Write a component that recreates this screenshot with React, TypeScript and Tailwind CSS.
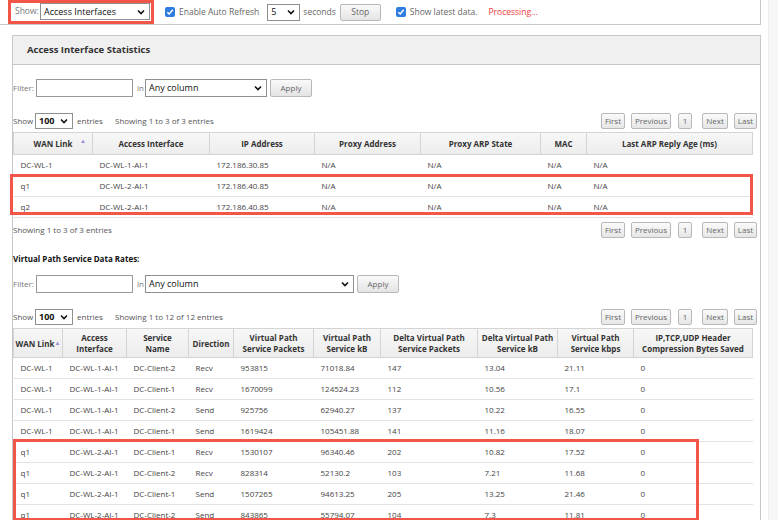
import React from "react";

// Access interface / virtual path stats page

const AI_ROWS = [
  ["DC-WL-1", "DC-WL-1-AI-1", "172.186.30.85", "N/A", "N/A", "N/A", "N/A"],
  ["q1", "DC-WL-2-AI-1", "172.186.40.85", "N/A", "N/A", "N/A", "N/A"],
  ["q2", "DC-WL-2-AI-1", "172.186.40.85", "N/A", "N/A", "N/A", "N/A"],
];

const VP_ROWS = [
  ["DC-WL-1", "DC-WL-1-AI-1", "DC-Client-2", "Recv", "953815", "71018.84", "147", "13.04", "21.11", "0"],
  ["DC-WL-1", "DC-WL-1-AI-1", "DC-Client-1", "Recv", "1670099", "124524.23", "112", "10.56", "17.1", "0"],
  ["DC-WL-1", "DC-WL-1-AI-1", "DC-Client-2", "Send", "925756", "62940.27", "137", "10.22", "16.55", "0"],
  ["DC-WL-1", "DC-WL-1-AI-1", "DC-Client-1", "Send", "1619424", "105451.88", "141", "11.16", "18.07", "0"],
  ["q1", "DC-WL-2-AI-1", "DC-Client-1", "Recv", "1530107", "96340.46", "202", "10.82", "17.52", "0"],
  ["q1", "DC-WL-2-AI-1", "DC-Client-2", "Recv", "828314", "52130.2", "103", "7.21", "11.68", "0"],
  ["q1", "DC-WL-2-AI-1", "DC-Client-1", "Send", "1507265", "94613.25", "205", "13.25", "21.46", "0"],
  ["q1", "DC-WL-2-AI-1", "DC-Client-2", "Send", "843865", "55794.07", "104", "7.3", "11.81", "0"],
];

const AI_COLS = [79, 117, 105, 106, 120, 46, 166];
const VP_COLS = [49, 64, 62, 45, 80, 67, 97, 80, 76, 119];

const VP_HEADS: [string, string?][] = [
  ["WAN Link"],
  ["Access", "Interface"],
  ["Service", "Name"],
  ["Direction"],
  ["Virtual Path", "Service Packets"],
  ["Virtual Path", "Service kB"],
  ["Delta Virtual Path", "Service Packets"],
  ["Delta Virtual Path", "Service kB"],
  ["Virtual Path", "Service kbps"],
  ["IP,TCP,UDP Header", "Compression Bytes Saved"],
];

function Chevron() {
  return (
    <svg width="8" height="6" viewBox="0 0 8 6" className="shrink-0">
      <path d="M1 1.5 L4 4.5 L7 1.5" fill="none" stroke="#111" strokeWidth="1.6" />
    </svg>
  );
}

function Select({ value, w, h = "h-[17px]" }: { value: string; w: string; h?: string }) {
  return (
    <div className={`${w} ${h} border border-[#8f8f8f] bg-white flex items-center justify-between pl-[3px] pr-[4px] text-[9px] text-[#111]`}>
      <span>{value}</span>
      <Chevron />
    </div>
  );
}

function Check() {
  return (
    <div className="w-[10px] h-[10px] rounded-[2px] bg-[#2f7de1] flex items-center justify-center">
      <svg width="8" height="8" viewBox="0 0 8 8">
        <path d="M1.3 4.2 L3.2 6 L6.7 1.8" fill="none" stroke="#fff" strokeWidth="1.5" />
      </svg>
    </div>
  );
}

function Btn({ label, w }: { label: string; w: string }) {
  return (
    <div className={`${w} h-[16px] border border-[#b8b8b8] rounded-[2px] bg-gradient-to-b from-[#fafafa] to-[#e6e6e6] flex items-center justify-center text-[8px] text-[#666]`}>
      {label}
    </div>
  );
}

function Pager() {
  return (
    <div className="flex items-center">
      <Btn label="First" w="w-[24px]" />
      <div className="w-[6px]" />
      <Btn label="Previous" w="w-[40px]" />
      <div className="w-[7px]" />
      <Btn label="1" w="w-[14px]" />
      <div className="w-[10px]" />
      <Btn label="Next" w="w-[26px]" />
      <div className="w-[6px]" />
      <Btn label="Last" w="w-[23px]" />
    </div>
  );
}

function FilterRow({ selectW, top }: { selectW: string; top: string }) {
  return (
    <div className={`flex items-center ${top} text-[8px] text-[#777]`}>
      <span className="w-[23px]">Filter:</span>
      <div className="w-[97px] h-[18px] border border-[#999] bg-white" />
      <span className="ml-[4px] w-[8px]">in</span>
      <Select value="Any column" w={selectW} h="h-[18px]" />
      <div className="ml-[3px] w-[42px] h-[18px] border border-[#b8b8b8] rounded-[2px] bg-gradient-to-b from-[#fafafa] to-[#e4e4e4] flex items-center justify-center text-[8px] text-[#666]">
        Apply
      </div>
    </div>
  );
}

function ShowRow({ text, top }: { text: string; top: string }) {
  return (
    <div className={`flex items-center justify-between pr-[3px] ${top}`}>
      <div className="flex items-center text-[8px] text-[#555]">
        <span className="w-[22px]">Show</span>
        <div className="w-[38px] h-[16px] border border-[#8f8f8f] bg-white flex items-center justify-between pl-[3px] pr-[4px] text-[9px] font-bold text-[#111]">
          <span>100</span>
          <Chevron />
        </div>
        <span className="ml-[4px] w-[38px]">entries</span>
        <span>{text}</span>
      </div>
      <Pager />
    </div>
  );
}

export default function App() {
  return (
    <div className="w-[778px] h-[520px] overflow-hidden bg-white flex font-['Open_Sans',sans-serif]">
      <div className="w-[768px] shrink-0">
        {/* top toolbar */}
        <div className="w-[761px] h-[25px] border-b border-r border-[#c9c9c9] flex items-center text-[8.5px] text-[#666]">
          <div className="ml-[8px] h-[24px] w-[146px] border-[3px] border-[#f25648] flex items-center pl-[4px] -mt-[1px]">
            <span className="w-[25px] text-[#777]">Show:</span>
            <Select value="Access Interfaces" w="w-[110px]" />
          </div>
          <div className="ml-[11px] flex items-center gap-[4px]">
            <Check />
            <span>Enable Auto Refresh</span>
          </div>
          <div className="ml-[8px] w-[33px] h-[17px] border border-[#8f8f8f] bg-white flex items-center justify-between pl-[3px] pr-[4px] text-[9px] text-[#111]">
            <span>5</span>
            <Chevron />
          </div>
          <span className="ml-[3px]">seconds</span>
          <div className="ml-[4px] w-[41px] h-[17px] border border-[#b8b8b8] rounded-[2px] bg-gradient-to-b from-[#fafafa] to-[#e4e4e4] flex items-center justify-center text-[#666]">
            Stop
          </div>
          <div className="ml-[15px] flex items-center gap-[4px]">
            <Check />
            <span>Show latest data.</span>
          </div>
          <span className="ml-[11px] text-[#ee3b3b]">Processing...</span>
        </div>

        {/* panel */}
        <div className="mt-[10px] ml-[12px] w-[749px] h-[600px] border-l border-r border-t border-[#c4c8cc]">
          <div className="h-[29px] bg-[#f0f0f0] border-b border-[#c4c8cc] flex items-center pl-[14px] text-[9.5px] font-bold text-[#333]">
            Access Interface Statistics
          </div>

          <FilterRow selectW="w-[122px]" top="mt-[14px]" />
          <ShowRow text="Showing 1 to 3 of 3 entries" top="mt-[16px]" />

          <div className="relative mt-[3px]">
            <table className="table-fixed border-collapse w-[739px] text-[8px] text-[#444]">
              <colgroup>
                {AI_COLS.map((w, i) => (
                  <col key={i} style={{ width: w }} />
                ))}
              </colgroup>
              <thead>
                <tr className="h-[22px] bg-gradient-to-b from-[#f7f7f7] to-[#ececec]">
                  {["WAN Link", "Access Interface", "IP Address", "Proxy Address", "Proxy ARP State", "MAC", "Last ARP Reply Age (ms)"].map((h, i) => (
                    <th key={h} className="relative border border-[#d4d4d4] font-bold text-[#333] text-center">
                      {h}
                      {i === 0 && <span className="absolute right-[6px] top-[4px] text-[6px] text-[#9a8fd8]">▲</span>}
                    </th>
                  ))}
                </tr>
              </thead>
              <tbody>
                {AI_ROWS.map((r, ri) => (
                  <tr key={ri} className="h-[21px] border-b border-[#e2e2e2]">
                    {r.map((c, ci) => (
                      <td key={ci} className="pl-[7px] whitespace-nowrap">{c}</td>
                    ))}
                  </tr>
                ))}
              </tbody>
            </table>
            {/* annotation */}
            <div className="absolute left-[-3px] top-[42px] w-[743px] h-[41px] border-[3px] border-[#f25648]" />
          </div>

          <div className="flex items-center justify-between pr-[3px] mt-[4px]">
            <span className="text-[8px] text-[#555]">Showing 1 to 3 of 3 entries</span>
            <Pager />
          </div>

          <div className="mt-[15px] text-[8px] font-bold text-[#111]">Virtual Path Service Data Rates:</div>

          <FilterRow selectW="w-[209px]" top="mt-[10px]" />
          <ShowRow text="Showing 1 to 12 of 12 entries" top="mt-[16px]" />

          <div className="relative mt-[3px]">
            <table className="table-fixed border-collapse w-[739px] text-[8px] text-[#444]">
              <colgroup>
                {VP_COLS.map((w, i) => (
                  <col key={i} style={{ width: w }} />
                ))}
              </colgroup>
              <thead>
                <tr className="h-[29px] bg-gradient-to-b from-[#f7f7f7] to-[#ececec]">
                  {VP_HEADS.map(([a, b], i) => (
                    <th key={i} className="border border-[#d4d4d4] font-bold text-[#333] text-center leading-[11px] px-[1px] whitespace-nowrap">
                      {i === 0 ? (
                        <span>
                          WAN Link<span className="text-[6px] text-[#9a8fd8] align-top">▲</span>
                        </span>
                      ) : (
                        <>
                          {a}
                          {b && (
                            <>
                              <br />
                              {b}
                            </>
                          )}
                        </>
                      )}
                    </th>
                  ))}
                </tr>
              </thead>
              <tbody>
                {VP_ROWS.map((r, ri) => (
                  <tr key={ri} className="h-[21px] border-b border-[#e2e2e2]">
                    {r.map((c, ci) => (
                      <td key={ci} className="pl-[7px] whitespace-nowrap">{c}</td>
                    ))}
                  </tr>
                ))}
              </tbody>
            </table>
            <div className="absolute left-[0px] top-[111px] w-[686px] h-[82px] border-[3px] border-[#f25648]" />
          </div>
        </div>
      </div>
      {/* scrollbar gutter */}
      <div className="w-[10px] h-full bg-[#f6f6f6] border-l border-[#ededed]" />
    </div>
  );
}
